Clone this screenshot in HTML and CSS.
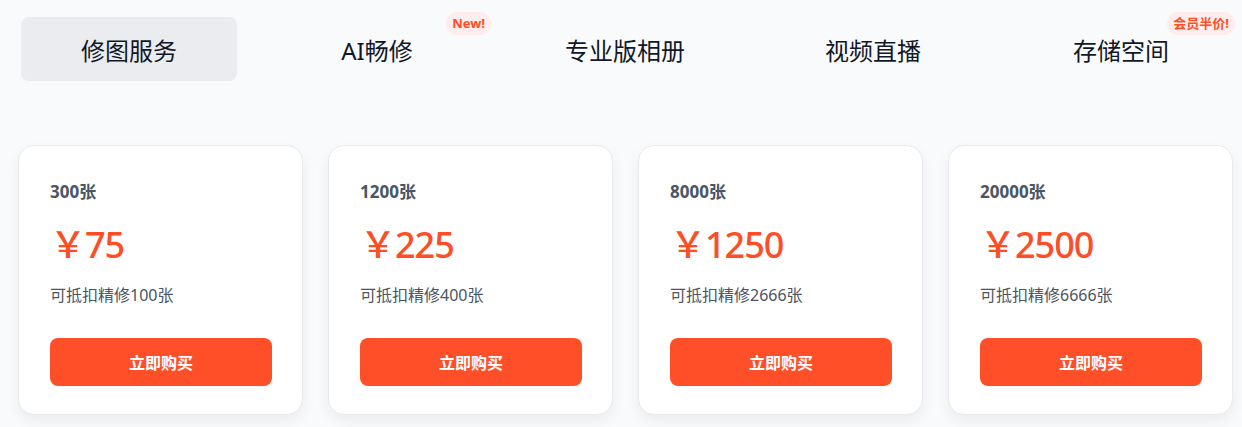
FILE: index.html
```html
<!DOCTYPE html>
<html lang="zh-CN">
<head>
<meta charset="utf-8">
<link rel="stylesheet" href="styles.css">
</head>
<body>
<div class="page">
  <nav class="tabs">
    <div class="tab active">修图服务</div>
    <div class="tab">AI畅修<span class="badge">New!</span></div>
    <div class="tab">专业版相册</div>
    <div class="tab">视频直播</div>
    <div class="tab">存储空间<span class="badge">会员半价!</span></div>
  </nav>
  <div class="cards">
    <div class="card">
      <div class="count">300张</div>
      <div class="price">￥75</div>
      <div class="desc">可抵扣精修100张</div>
      <button class="buy">立即购买</button>
    </div>
    <div class="card">
      <div class="count">1200张</div>
      <div class="price">￥225</div>
      <div class="desc">可抵扣精修400张</div>
      <button class="buy">立即购买</button>
    </div>
    <div class="card">
      <div class="count">8000张</div>
      <div class="price">￥1250</div>
      <div class="desc">可抵扣精修2666张</div>
      <button class="buy">立即购买</button>
    </div>
    <div class="card">
      <div class="count">20000张</div>
      <div class="price">￥2500</div>
      <div class="desc">可抵扣精修6666张</div>
      <button class="buy">立即购买</button>
    </div>
  </div>
</div>
</body>
</html>
```
FILE: styles.css
```css
* { box-sizing: border-box; }
html, body {
  margin: 0;
  padding: 0;
  background: #f9fafb;
  font-family: "Noto Sans", "Noto Sans CJK SC", sans-serif;
  color: #1f2937;
}
.page {
  width: 1242px;
  height: 427px;
  overflow: hidden;
  padding: 17px 0 0 0;
}
.tabs {
  display: grid;
  grid-template-columns: repeat(5, 216px);
  column-gap: 32px;
  padding-left: 21px;
}
.tab {
  position: relative;
  height: 64px;
  display: flex;
  align-items: center;
  justify-content: center;
  font-size: 24px;
  color: #111827;
  border-radius: 8px;
}
.tab.active {
  background: #ebecef;
}
.badge {
  position: absolute;
  top: -5px;
  right: -6px;
  height: 23px;
  padding: 0 6px;
  border-radius: 12px;
  background: #ffeded;
  color: #ff4d26;
  font-size: 13px;
  font-weight: 700;
  line-height: 23px;
}
.cards {
  display: grid;
  grid-template-columns: repeat(4, 285px);
  column-gap: 25px;
  padding-left: 18px;
  margin-top: 64px;
}
.card {
  height: 270px;
  background: #fff;
  border: 1px solid #e9eaee;
  border-radius: 16px;
  box-shadow: 0 6px 14px rgba(17, 24, 39, 0.06);
  padding: 34px 30px 0 31px;
  display: flex;
  flex-direction: column;
}
.count {
  font-size: 17px;
  font-weight: 700;
  color: #4b5563;
  line-height: 24px;
}
.price {
  margin-top: 19px;
  font-size: 36px;
  line-height: 44px;
  color: #ff4d26;
  font-weight: 500;
  letter-spacing: -1px;
}
.desc {
  margin-top: 18px;
  font-size: 16px;
  line-height: 20px;
  color: #4b5563;
}
.buy {
  margin-top: 33px;
  height: 48px;
  width: 100%;
  border: none;
  border-radius: 8px;
  background: #ff4f28;
  color: #fff;
  font-family: inherit;
  font-size: 16px;
  font-weight: 700;
}
```
